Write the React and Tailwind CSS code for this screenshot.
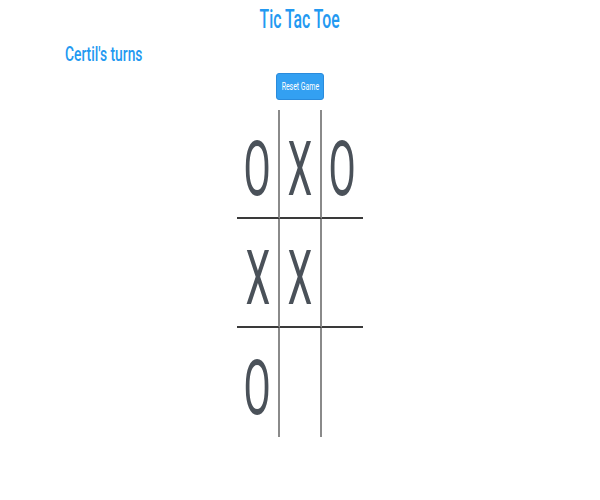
import { useState } from 'react';

const initialBoard = ['O', 'X', 'O', 'X', 'X', '', 'O', '', ''];

const cellBorders = [
    'border-r-2 border-b-2',
    'border-r-2 border-b-2',
    'border-b-2',
    'border-r-2 border-b-2',
    'border-r-2 border-b-2',
    'border-b-2',
    'border-r-2',
    'border-r-2',
    '',
];

export default function App() {
    const [board, setBoard] = useState(initialBoard);

    function play(index) {
        if (board[index]) return;
        const next = [...board];
        next[index] = board.filter(Boolean).length % 2 === 0 ? 'X' : 'O';
        setBoard(next);
    }

    return (
        <main className="min-h-screen bg-white font-['Roboto','Liberation_Sans',Arial,sans-serif]">
            <h1 className="pt-[5px] text-center text-[25px] font-medium leading-[30px] text-[#2399f1]">
                <span className="inline-block scale-x-[0.63]">Tic Tac Toe</span>
            </h1>
            <h2 className="mt-[7px] pl-[65px] text-[20px] font-medium leading-[24px] text-[#2399f1]">
                <span className="inline-block origin-left scale-x-[0.69]">Certil's turns</span>
            </h2>
            <div className="mt-[7px] flex justify-center">
                <button
                    className="flex h-[27px] w-[48px] items-center justify-center rounded-[3px] border border-[#2a8bdc] bg-[#33a0f2] text-[10.5px] text-white"
                    onClick={() => setBoard(Array(9).fill(''))}
                >
                    <span className="inline-block shrink-0 scale-x-[0.66] whitespace-nowrap">Reset Game</span>
                </button>
            </div>
            <div className="mx-auto mt-[10px] grid w-[126px] grid-cols-[43px_42px_41px]">
                {board.map((value, index) => (
                    <div
                        key={index}
                        onClick={() => play(index)}
                        className={`flex h-[109px] items-center justify-center border-r-[#8a8a8a] border-b-[#3a3a3a] pt-[10px] text-[76px] leading-none text-[#4a5159] ${cellBorders[index]}`}
                    >
                        <span className="inline-block scale-x-[0.52]">{value}</span>
                    </div>
                ))}
            </div>
        </main>
    );
}
